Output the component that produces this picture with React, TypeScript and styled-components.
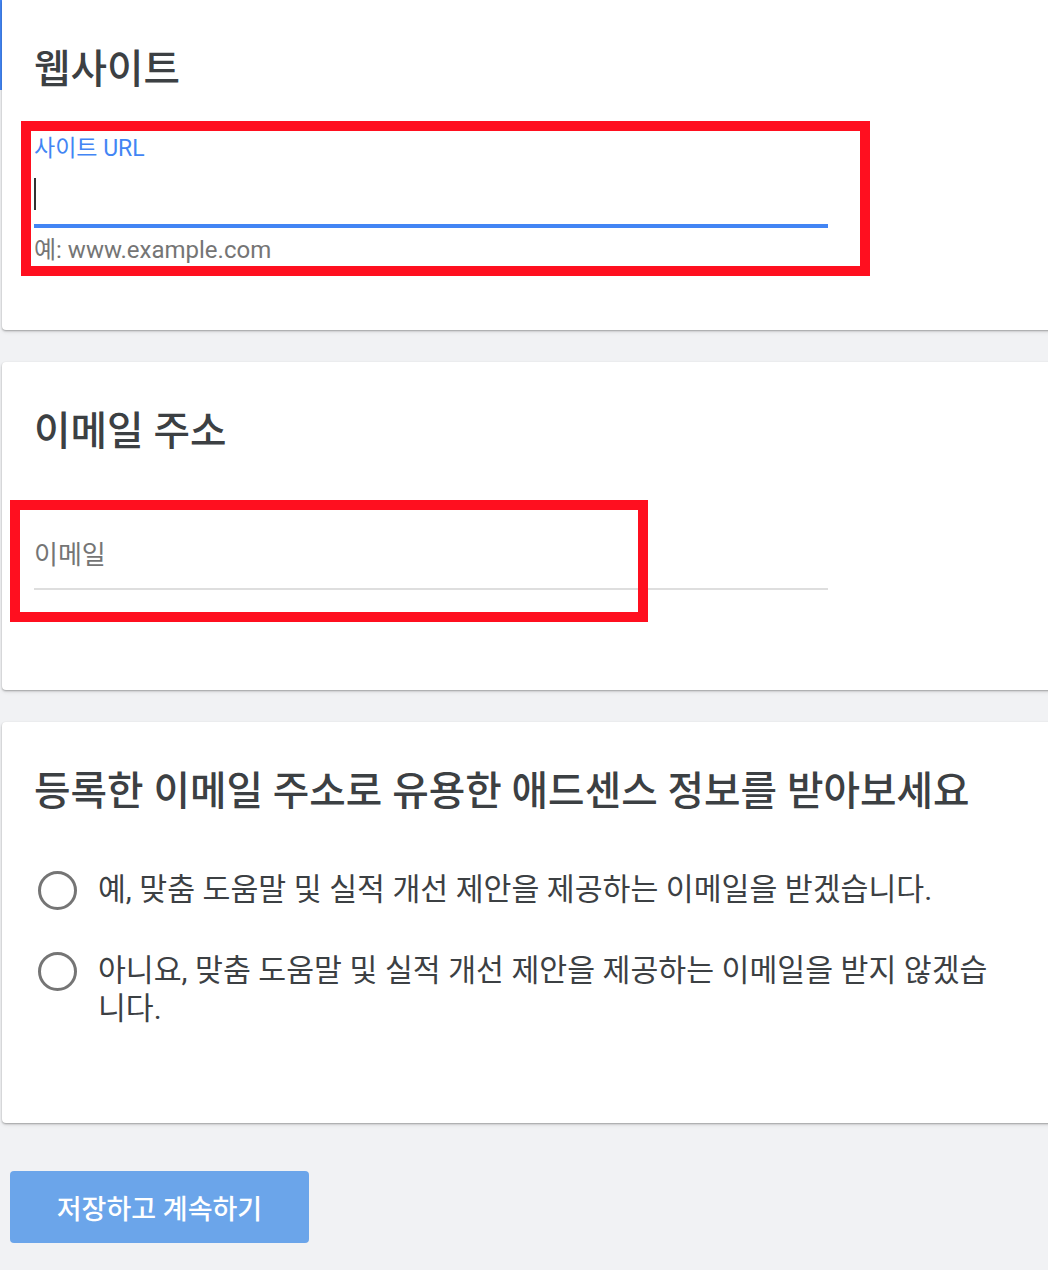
import React from 'react';
import styled, { createGlobalStyle } from 'styled-components';

const GlobalStyle = createGlobalStyle`
    html, body {
        margin: 0;
        padding: 0;
        background: #f1f2f4;
        overflow: hidden;
    }
    body {
        font-family: Roboto, "Noto Sans CJK KR", "Noto Sans", sans-serif;
        color: #3c4043;
    }
`;

const Page = styled.div`
    position: relative;
    width: 1080px;
    padding: 0 0 40px 2px;
    display: flex;
    flex-direction: column;
    gap: 32px;
`;

const LeftAccent = styled.div`
    position: absolute;
    left: 0;
    top: 0;
    width: 2px;
    height: 90px;
    background: #4285f4;
`;

const Card = styled.section`
    position: relative;
    background: #ffffff;
    border-radius: 4px;
    box-shadow: 0 1px 2px rgba(0, 0, 0, 0.3), 0 2px 4px rgba(0, 0, 0, 0.08);
    padding: 46px 0 0 32px;
`;

const Title = styled.h2`
    margin: 0;
    font-size: 39.7px;
    line-height: 48px;
    font-weight: 500;
    color: #3c4043;
`;

const Field = styled.div`
    width: 794px;
    margin-top: 41px;
`;

const FloatLabel = styled.div`
    height: 28px;
    font-size: 23px;
    line-height: 28px;
    color: #4285f4;
`;

const InputArea = styled.div<{ $focused?: boolean }>`
    height: 65px;
    box-sizing: border-box;
    display: flex;
    align-items: flex-end;
    padding-bottom: 17px;
    border-bottom: ${(p) => (p.$focused ? '4px solid #4285f4' : '2px solid #dedede')};
`;

const Caret = styled.span`
    display: block;
    width: 2px;
    height: 32px;
    margin-bottom: -3px;
    background: #333;
`;

const Placeholder = styled.span`
    font-size: 26px;
    line-height: 32px;
    color: #757575;
`;

const Helper = styled.div`
    margin-top: 8px;
    height: 28px;
    font-size: 24px;
    line-height: 28px;
    color: #757575;
`;

const CardEnd = styled.div<{ $space: number }>`
    height: ${(p) => p.$space}px;
`;

const Highlight = styled.div<{ $left: number; $top: number; $width: number; $height: number }>`
    position: absolute;
    left: ${(p) => p.$left}px;
    top: ${(p) => p.$top}px;
    width: ${(p) => p.$width}px;
    height: ${(p) => p.$height}px;
    box-sizing: border-box;
    border: 10px solid #ff0f1f;
    pointer-events: none;
`;

const Options = styled.div`
    margin-top: 55px;
    display: flex;
    flex-direction: column;
    gap: 42px;
    padding-bottom: 95px;
`;

const Option = styled.label`
    display: flex;
    align-items: flex-start;
    gap: 21px;
    cursor: pointer;
`;

const RadioCircle = styled.span`
    flex: none;
    width: 39px;
    height: 39px;
    box-sizing: border-box;
    border: 3.5px solid #757575;
    border-radius: 50%;
    margin: 0 0 0 4px;
`;

const OptionText = styled.span`
    font-size: 30.3px;
    line-height: 38px;
    color: #3c4043;
    max-width: 895px;
`;

const SaveButton = styled.button`
    margin: 16px 0 0 8px;
    width: 299px;
    height: 72px;
    border: none;
    border-radius: 4px;
    background: #6ba5ea;
    color: #ffffff;
    font-family: inherit;
    font-size: 27px;
    font-weight: 500;
    cursor: pointer;
`;

const options = [
    '예, 맞춤 도움말 및 실적 개선 제안을 제공하는 이메일을 받겠습니다.',
    '아니요, 맞춤 도움말 및 실적 개선 제안을 제공하는 이메일을 받지 않겠습니다.',
];

export default function App() {
    return (
        <>
            <GlobalStyle />
            <Page>
                <LeftAccent />
                <Card style={{ borderTopLeftRadius: 0, borderTopRightRadius: 0 }}>
                    <Title>웹사이트</Title>
                    <Field>
                        <FloatLabel>사이트 URL</FloatLabel>
                        <InputArea $focused>
                            <Caret />
                        </InputArea>
                        <Helper>예: www.example.com</Helper>
                    </Field>
                    <CardEnd $space={66} />
                    <Highlight $left={19} $top={121} $width={849} $height={155} />
                </Card>

                <Card>
                    <Title>이메일 주소</Title>
                    <Field>
                        <FloatLabel />
                        <InputArea>
                            <Placeholder>이메일</Placeholder>
                        </InputArea>
                        <Helper />
                    </Field>
                    <CardEnd $space={64} />
                    <Highlight $left={8} $top={138} $width={638} $height={122} />
                </Card>

                <Card>
                    <Title>등록한 이메일 주소로 유용한 애드센스 정보를 받아보세요</Title>
                    <Options>
                        {options.map((text) => (
                            <Option key={text}>
                                <RadioCircle />
                                <OptionText>{text}</OptionText>
                            </Option>
                        ))}
                    </Options>
                </Card>

                <div>
                    <SaveButton>저장하고 계속하기</SaveButton>
                </div>
            </Page>
        </>
    );
}
